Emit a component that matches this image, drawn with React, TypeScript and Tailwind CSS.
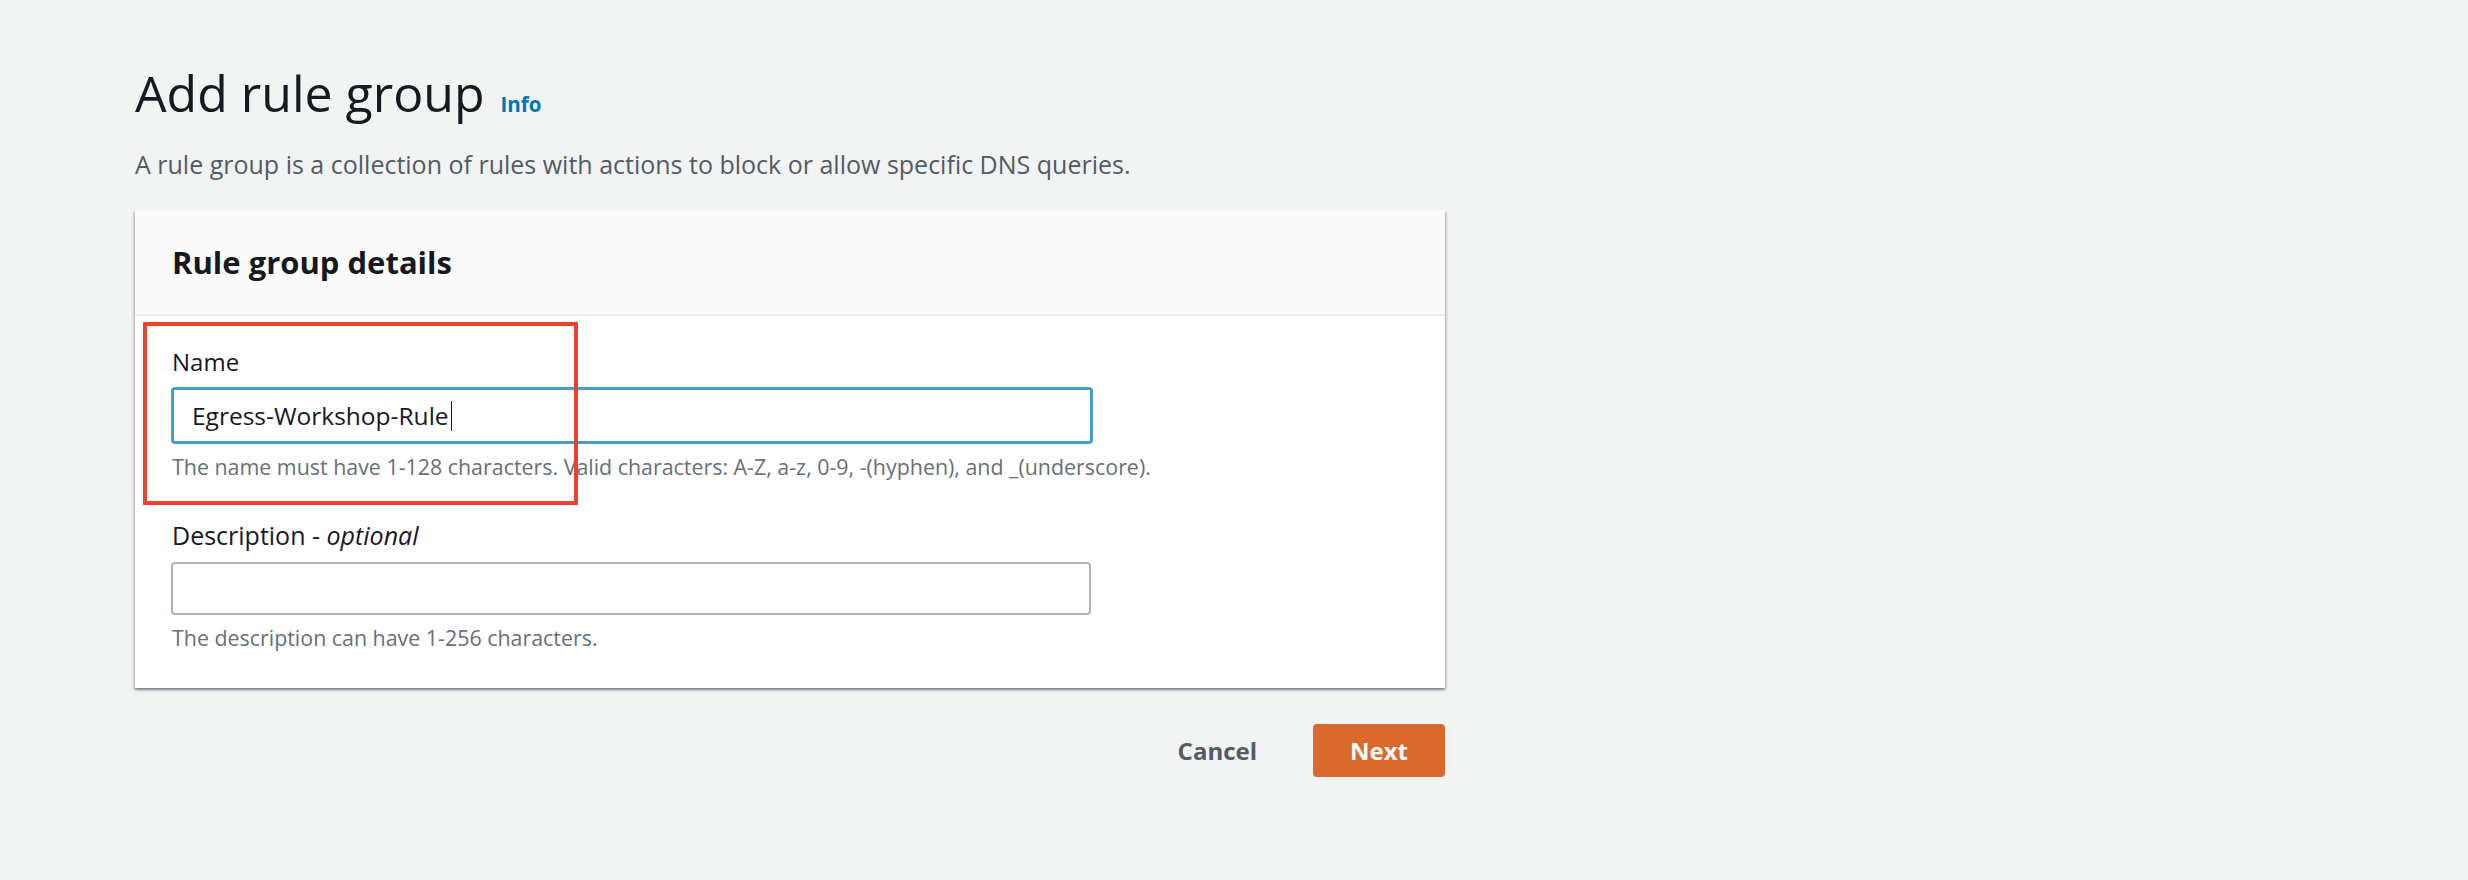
export default function App() {
  return (
    <div className="min-h-screen w-full bg-[#f2f3f3] font-['Open_Sans',sans-serif] text-[#16191f]">
      <div className="w-[1445px] pl-[135px] pt-[63px]">
        <div className="flex items-baseline gap-[16px]">
          <h1 className="text-[50px] leading-[60px] font-normal">Add rule group</h1>
          <a className="text-[20.5px] font-bold text-[#0073bb]">Info</a>
        </div>
        <p className="mt-[25px] text-[25px] leading-[32px] text-[#545b64]">
          A rule group is a collection of rules with actions to block or allow specific DNS queries.
        </p>

        <div className="relative mt-[30px] w-[1310px] bg-white shadow-[0_2px_2px_0_rgba(0,28,36,0.3),2px_2px_2px_0_rgba(0,28,36,0.15),-2px_2px_2px_0_rgba(0,28,36,0.15)]">
          <div className="flex h-[106px] items-center border-b-2 border-[#eaeded] bg-[#fafafa] px-[37px]">
            <h2 className="text-[31px] leading-[36px] font-bold">Rule group details</h2>
          </div>

          <div className="px-[36px] pt-[30px] pb-[35px]">
            <label className="block pl-[1px] text-[24px] leading-[32px]">Name</label>
            <div className="mt-[9px] flex h-[57px] w-[922px] items-center rounded-[4px] border-[3px] border-[#44a0c9] px-[18px] text-[24.5px] leading-[32px]">
              <span>Egress-Workshop-Rule</span>
              <span className="ml-[2px] h-[30px] w-[1px] bg-[#16191f]" />
            </div>
            <p className="mt-[8px] pl-[1px] text-[21.4px] leading-[30px] text-[#687078]">
              The name must have 1-128 characters. Valid characters: A-Z, a-z, 0-9, -(hyphen), and _(underscore).
            </p>

            <label className="mt-[37px] block pl-[1px] text-[25px] leading-[32px]">
              Description - <i>optional</i>
            </label>
            <div className="mt-[11px] h-[53px] w-[920px] rounded-[4px] border-2 border-[#aab7b8] bg-white" />
            <p className="mt-[8px] pl-[1px] text-[21.4px] leading-[30px] text-[#687078]">
              The description can have 1-256 characters.
            </p>
          </div>

          {/* annotation box */}
          <div className="absolute left-[8px] top-[112px] h-[183px] w-[435px] border-[4px] border-[#e8432d]" />
        </div>

        <div className="mt-[36px] flex w-[1310px] items-center justify-end gap-[36px]">
          <button className="px-[20px] text-[24px] leading-[32px] font-bold text-[#545b64]">Cancel</button>
          <button className="h-[53px] w-[132px] rounded-[4px] bg-[#d9692c] text-[24px] leading-[32px] font-bold text-white">
            Next
          </button>
        </div>
      </div>
    </div>
  )
}
